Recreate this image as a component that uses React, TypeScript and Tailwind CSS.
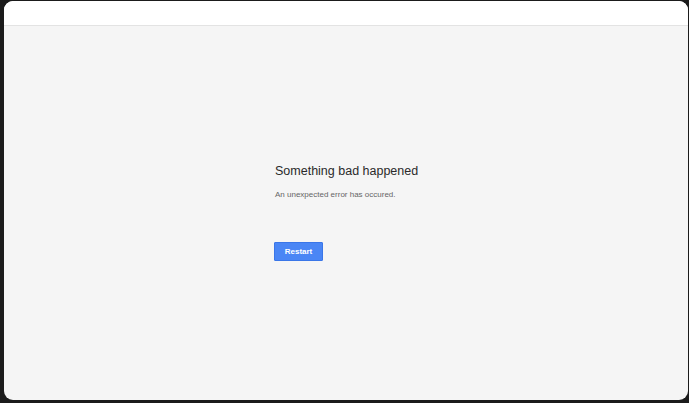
export default function App() {
  return (
    <div className="h-[403px] w-[689px] bg-[#1b1b1b] pl-[4px] pt-[1px] pb-[3px] overflow-hidden" style={{ fontFamily: '"Liberation Sans", Arial, sans-serif' }}>
      <div className="flex h-full w-[684px] flex-col overflow-hidden rounded-[9px] bg-[#f5f5f5]">
        <div className="h-[25px] shrink-0 border-b border-[#e3e3e3] bg-white" />
        <div className="flex-1 pl-[271px] pt-[137px]">
          <h1 className="text-[12.5px] leading-[16px] text-[#2a2a2a]">Something bad happened</h1>
          <p className="mt-[11px] text-[8px] leading-[10px] text-[#666]">An unexpected error has occured.</p>
          <button className="-ml-px mt-[42px] h-[19px] w-[49px] rounded-[1px] border border-[#3a76e8] bg-[#4a86f5] text-[8px] font-bold text-white">
            Restart
          </button>
        </div>
      </div>
    </div>
  );
}
